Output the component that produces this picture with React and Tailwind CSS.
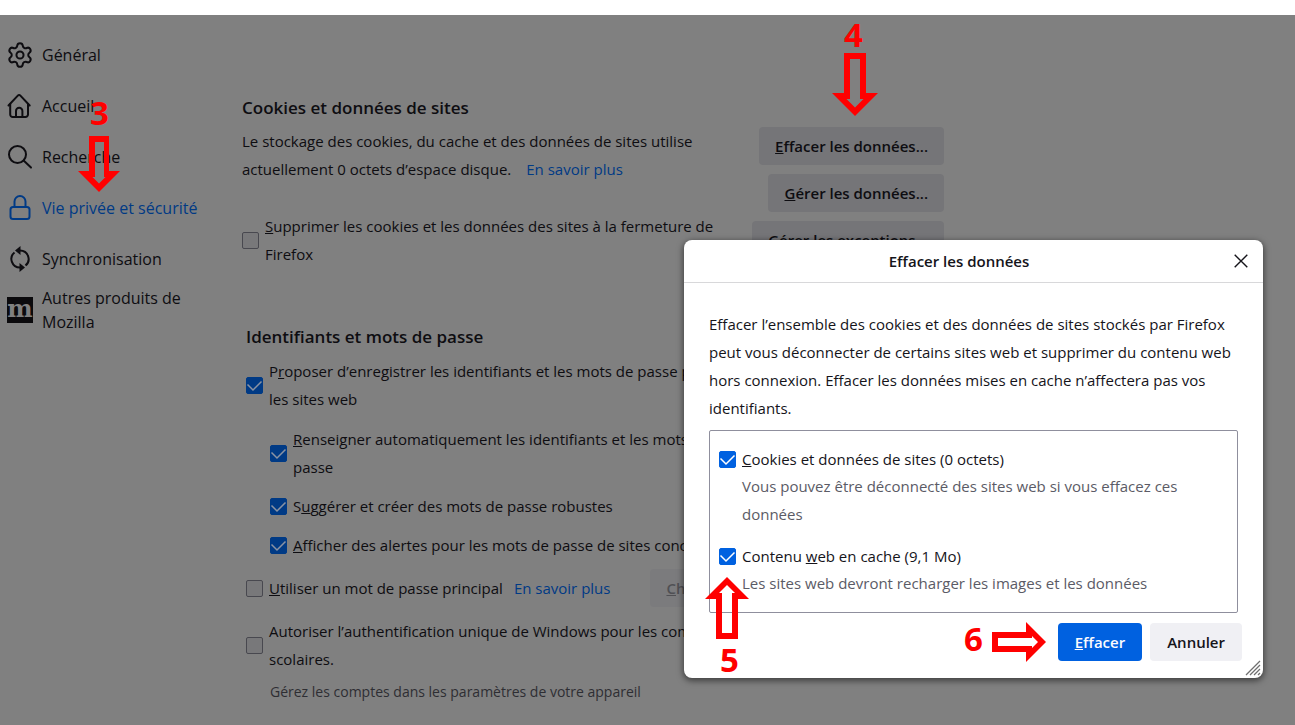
import { useState } from "react";
import { Settings } from "lucide-react";

function HomeIcon() {
  return (
    <svg viewBox="0 0 26 26" className="size-[26px]" fill="none" stroke="currentColor" strokeWidth="2" strokeLinecap="round" strokeLinejoin="round">
      <path d="M1.500 12.500 10.800 2.600a1.800 1.800 0 0 1 2.600 0l9.300 9.900" />
      <path d="M3.200 11v10.500a2.500 2.500 0 0 0 2.500 2.500h12.800a2.500 2.500 0 0 0 2.500-2.500V11" />
      <path d="M9 24v-6a3.200 3.200 0 0 1 6.400 0v6" />
    </svg>
  );
}

function SearchIcon() {
  return (
    <svg viewBox="0 0 26 26" className="size-[26px]" fill="none" stroke="currentColor" strokeWidth="2" strokeLinecap="round">
      <circle cx="10.500" cy="10.500" r="8.500" />
      <path d="m16.600 16.600 7.400 7" />
    </svg>
  );
}

function LockIcon() {
  return (
    <svg viewBox="0 0 26 26" className="size-[26px]" fill="none" stroke="currentColor" strokeWidth="2">
      <rect x="3.500" y="12" width="19" height="12" rx="2.500" />
      <path d="M7.500 12V6.500a5.500 5.500 0 0 1 11 0V12" />
    </svg>
  );
}

function SyncIcon() {
  return (
    <svg viewBox="0 0 26 26" className="size-[26px]" fill="none" stroke="currentColor" strokeWidth="2">
      <path d="M13 4.400A8.600 8.600 0 0 1 18.500 19.600" />
      <path d="M13 21.600A8.600 8.600 0 0 1 7.500 6.400" />
      <path d="M13.500 0v9L8 4.500zM12.500 26v-9l5.500 4.500z" fill="currentColor" stroke="none" />
    </svg>
  );
}

function MozillaIcon() {
  return (
    <span className="flex size-[26px] items-center justify-center bg-[#0b0a0d] pb-0.5 font-['DejaVu_Serif',serif] text-2xl leading-none font-bold text-[#808080]">
      m
    </span>
  );
}

const NAV_ITEMS = [
  { id: "general", label: "Général", icon: <Settings viewBox="1 1 22 22" className="size-[26px]" strokeWidth={1.700} /> },
  { id: "home", label: "Accueil", icon: <HomeIcon /> },
  { id: "search", label: "Recherche", icon: <SearchIcon /> },
  { id: "privacy", label: "Vie privée et sécurité", icon: <LockIcon />, active: true },
  { id: "sync", label: "Synchronisation", icon: <SyncIcon /> },
  { id: "more", label: "Autres produits de Mozilla", icon: <MozillaIcon /> },
];

function CheckBox({ id, defaultChecked = false, dimmed = false }) {
  const [checked, setChecked] = useState(defaultChecked);

  let box = "border border-[#0061e0] bg-[#0061e0]";
  if (dimmed) {
    box = checked ? "border border-[#003a85] bg-[#003a85]" : "border border-[#48484f] bg-[#78787a]";
  }

  return (
    <span className="grid size-[17px] shrink-0">
      <input
        id={id}
        type="checkbox"
        checked={checked}
        onChange={(event) => setChecked(event.target.checked)}
        className={`col-start-1 row-start-1 size-[17px] appearance-none rounded-xs ${box}`}
      />
      {checked && (
        <svg
          viewBox="0 0 17 17"
          className={`pointer-events-none col-start-1 row-start-1 size-[17px] ${dimmed ? "text-[#8a93a3]" : "text-white"}`}
          fill="none"
          stroke="currentColor"
          strokeWidth="1.500"
        >
          <path d="m1.500 7.500 5.500 5.500L15.500 4.500" />
        </svg>
      )}
    </span>
  );
}

function CheckRow({ id, checked, className = "", children }) {
  return (
    <div className={`flex items-center gap-1.5 ${className}`}>
      <CheckBox id={id} defaultChecked={checked} dimmed />
      <label htmlFor={id} className="whitespace-nowrap">
        {children}
      </label>
    </div>
  );
}

function PageButton({ children }) {
  return (
    <button type="button" className="h-[38px] rounded bg-[#757578] px-4 font-semibold whitespace-nowrap">
      {children}
    </button>
  );
}

function Sidebar() {
  return (
    <nav className="w-[242px] shrink-0 pt-[14px] pl-[7px]">
      {NAV_ITEMS.map((item) => (
        <a
          key={item.id}
          href={`#${item.id}`}
          className={`flex h-[51px] items-center gap-[9px] pr-8 text-base leading-6 ${item.active ? "text-[#003a85]" : ""}`}
        >
          <span className="shrink-0">{item.icon}</span>
          <span>{item.label}</span>
        </a>
      ))}
    </nav>
  );
}

function ClearDataDialog() {
  return (
    <div
      role="dialog"
      aria-labelledby="dialog-title"
      className="absolute top-[240px] left-[684px] w-[579px] rounded-lg bg-white text-[#15141a] shadow-[0_2px_6px_1px_rgba(0,0,0,0.5)]"
    >
      <header className="flex h-[43px] items-center border-b border-[#d8d8da] pr-[15px]">
        <h2 id="dialog-title" className="flex-1 text-center font-semibold">
          Effacer les données
        </h2>
        <button type="button" aria-label="Fermer">
          <svg viewBox="0 0 14 14" className="size-3.5" fill="none" stroke="currentColor" strokeWidth="1.400">
            <path d="m.7.7 12.600 12.600M13.300.7.700 13.300" />
          </svg>
        </button>
      </header>

      <div className="px-[25px] pt-[27px]">
        <p>
          Effacer l’ensemble des cookies et des données de sites stockés par Firefox
          <br />
          peut vous déconnecter de certains sites web et supprimer du contenu web
          <br />
          hors connexion. Effacer les données mises en cache n’affectera pas vos
          <br />
          identifiants.
        </p>

        <div className="mt-2 h-[183px] rounded-xs border border-[#8f8f9d] px-[9px] pt-[14px]">
          <div className="flex items-center gap-1.5">
            <CheckBox id="clear-cookies" defaultChecked />
            <label htmlFor="clear-cookies">
              <u>C</u>ookies et données de sites (0 octets)
            </label>
          </div>
          <p className="-mt-px pl-[23px] text-[#5b5b66]">
            Vous pouvez être déconnecté des sites web si vous effacez ces
            <br />
            données
          </p>
          <div className="mt-3.5 flex items-center gap-1.5">
            <CheckBox id="clear-cache" defaultChecked />
            <label htmlFor="clear-cache">
              Contenu <u>w</u>eb en cache (9,1 Mo)
            </label>
          </div>
          <p className="-mt-px pl-[23px] text-[#5b5b66]">Les sites web devront recharger les images et les données</p>
        </div>
      </div>

      <footer className="flex justify-end gap-2 pt-2.5 pr-[21px] pb-[17px]">
        <button type="button" className="h-[38px] rounded bg-[#0061e0] px-[17px] font-semibold text-[#fbfbfe]">
          <u>E</u>ffacer
        </button>
        <button type="button" className="h-[38px] rounded bg-[#f0f0f4] px-[17px] font-semibold">
          Annuler
        </button>
      </footer>

      <svg viewBox="0 0 16 16" className="absolute right-0.5 bottom-0.5 size-4" stroke="#6f6f6f" strokeWidth="1.300">
        <path d="M1 15 15 1M5 15 15 5M9 15l6-6M13 15l2-2" />
      </svg>
    </div>
  );
}

function StepNumber({ children, className }) {
  return (
    <span className={`absolute font-['Open_Sans',sans-serif] text-[33px] leading-8 font-bold text-[#ff0000] ${className}`}>
      {children}
    </span>
  );
}

// Red outlined arrows that mark each step of the procedure
function StepMarkers() {
  return (
    <div className="pointer-events-none">
      <StepNumber className="top-[97px] left-[90px]">3</StepNumber>
      <svg viewBox="0 0 42 56" className="absolute top-[136px] left-[78px] h-[56px] w-[42px]" fill="#ff0000" fillRule="evenodd">
        <path d="M11 0H31V35H42L21 56 0 35H11ZM17 6V41H14.500L21 47.500 27.500 41H26V6Z" />
      </svg>

      <StepNumber className="top-[19px] left-[844px]">4</StepNumber>
      <svg viewBox="0 0 46 63" className="absolute top-[53px] left-[832px] h-[63px] w-[46px]" fill="#ff0000" fillRule="evenodd">
        <path d="M12 0H34V40H46L23 63 0 40H12ZM18 6V46H14.500L23 54.500 31.500 46H28V6Z" />
      </svg>

      <StepNumber className="top-[644px] left-[720px]">5</StepNumber>
      <svg viewBox="0 0 44 62" className="absolute top-[577px] left-[705px] h-[62px] w-[44px]" fill="#ff0000" fillRule="evenodd">
        <path d="M11 62H33V22H44L22 0 0 22H11ZM17 56V16H14L22 8 30 16H27V56Z" />
      </svg>

      <StepNumber className="top-[623px] left-[964px]">6</StepNumber>
      <svg viewBox="0 0 54 40" className="absolute top-[622px] left-[992px] h-[40px] w-[54px]" fill="#ff0000" fillRule="evenodd">
        <path d="M0 10H34V0L54 20 34 40V30H0ZM6 16H40V14L46 20 40 26V24H6Z" />
      </svg>
    </div>
  );
}

export default function App() {
  return (
    <div className="relative flex min-h-screen flex-col overflow-hidden bg-white pt-[15px] font-['Open_Sans','Noto_Sans',sans-serif] text-[15px] leading-7 text-[#0e0d11]">
      <div className="flex flex-1 bg-[#808080]">
        <Sidebar />

        <main className="max-w-[702px] flex-1 pt-[78px] pb-4">
          <section>
            <h2 className="text-[17px] leading-[30px] font-semibold">Cookies et données de sites</h2>
            <div className="mt-1 flex h-[195px] items-start justify-between">
              <div>
                <p className="whitespace-nowrap">
                  Le stockage des cookies, du cache et des données de sites utilise
                  <br />
                  actuellement 0 octets d’espace disque.
                  <a href="#cookies" className="ml-[15px] text-[#003a85]">
                    En savoir plus
                  </a>
                </p>
                <CheckRow id="delete-on-close" className="mt-[29px]">
                  <u>S</u>upprimer les cookies et les données des sites à la fermeture de
                  <br />
                  Firefox
                </CheckRow>
              </div>
              <div className="flex flex-col items-end gap-[9px]">
                <PageButton>
                  <u>E</u>ffacer les données...
                </PageButton>
                <PageButton>
                  <u>G</u>érer les données...
                </PageButton>
                <PageButton>Gérer les exceptions...</PageButton>
              </div>
            </div>
          </section>

          <section className="pl-1">
            <h2 className="text-[17px] leading-[30px] font-semibold">Identifiants et mots de passe</h2>
            <CheckRow id="ask-save" checked className="mt-[5px]">
              P<u>r</u>oposer d’enregistrer les identifiants et les mots de passe pour
              <br />
              les sites web
            </CheckRow>
            <div className="mt-3 flex flex-col gap-[11px] pl-6">
              <CheckRow id="autofill" checked>
                <u>R</u>enseigner automatiquement les identifiants et les mots de
                <br />
                passe
              </CheckRow>
              <CheckRow id="suggest" checked>
                S<u>u</u>ggérer et créer des mots de passe robustes
              </CheckRow>
              <CheckRow id="alerts" checked>
                <u>A</u>fficher des alertes pour les mots de passe de sites concernés
              </CheckRow>
            </div>
            <div className="mt-2.5 flex items-center">
              <CheckRow id="primary-password">
                <u>U</u>tiliser un mot de passe principal
              </CheckRow>
              <a href="#primary" className="ml-[11px] whitespace-nowrap text-[#003a85]">
                En savoir plus
              </a>
              <button
                type="button"
                disabled
                className="ml-10 h-[38px] rounded bg-[#7b7b7d] px-4 font-semibold whitespace-nowrap text-[#505054]"
              >
                <u>C</u>hanger…
              </button>
            </div>
            <CheckRow id="windows-sso" className="mt-2.5">
              Autoriser l’authentification unique de Windows pour les comptes
              <br />
              scolaires.
            </CheckRow>
            <p className="mt-[5px] pl-6 text-sm leading-7 text-[#2e2e33]">Gérez les comptes dans les paramètres de votre appareil</p>
          </section>
        </main>
      </div>

      <ClearDataDialog />
      <StepMarkers />
    </div>
  );
}
